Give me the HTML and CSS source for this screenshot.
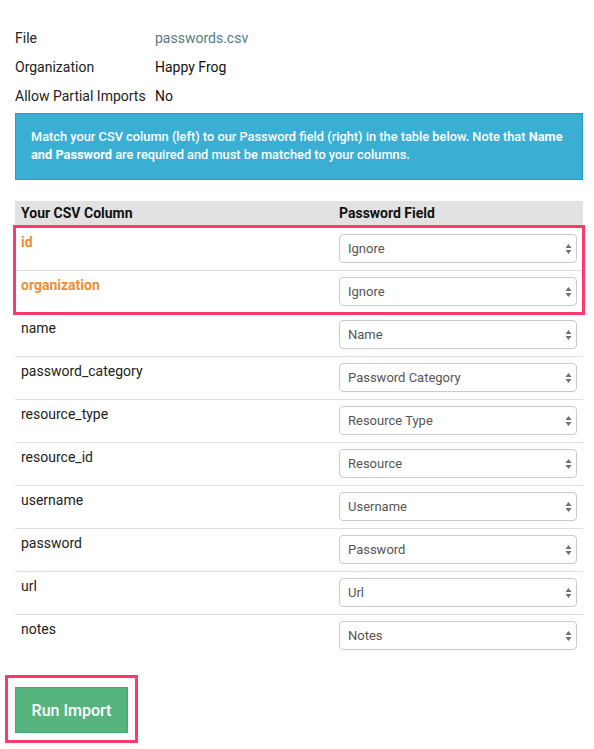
FILE: index.html
```html
<!DOCTYPE html>
<html>
<head>
<meta charset="utf-8">
<link rel="stylesheet" href="styles.css">
</head>
<body>
<div class="page">
  <div class="meta">
    <div class="meta-label">File</div><div class="meta-value file">passwords.csv</div>
    <div class="meta-label">Organization</div><div class="meta-value">Happy Frog</div>
    <div class="meta-label">Allow Partial Imports</div><div class="meta-value">No</div>
  </div>

  <div class="notice">Match your CSV column (left) to our Password field (right) in the table below. Note that <b>Name and Password</b> are required and must be matched to your columns.</div>

  <div class="table">
    <div class="row head">
      <div class="cell">Your CSV Column</div>
      <div class="cell">Password Field</div>
    </div>
    <div class="highlight">
      <div class="row">
        <div class="cell col warn">id</div>
        <div class="cell sel"><div class="select"><span>Ignore</span><svg width="7" height="12" viewBox="0 0 7 12"><path d="M3.5 1 L6.5 5 H0.5 Z M3.5 11 L6.5 7 H0.5 Z" fill="#6f6f6f"/></svg></div></div>
      </div>
      <div class="row">
        <div class="cell col warn">organization</div>
        <div class="cell sel"><div class="select"><span>Ignore</span><svg width="7" height="12" viewBox="0 0 7 12"><path d="M3.5 1 L6.5 5 H0.5 Z M3.5 11 L6.5 7 H0.5 Z" fill="#6f6f6f"/></svg></div></div>
      </div>
    </div>
    <div class="row">
      <div class="cell col">name</div>
      <div class="cell sel"><div class="select"><span>Name</span><svg width="7" height="12" viewBox="0 0 7 12"><path d="M3.5 1 L6.5 5 H0.5 Z M3.5 11 L6.5 7 H0.5 Z" fill="#6f6f6f"/></svg></div></div>
    </div>
    <div class="row">
      <div class="cell col">password_category</div>
      <div class="cell sel"><div class="select"><span>Password Category</span><svg width="7" height="12" viewBox="0 0 7 12"><path d="M3.5 1 L6.5 5 H0.5 Z M3.5 11 L6.5 7 H0.5 Z" fill="#6f6f6f"/></svg></div></div>
    </div>
    <div class="row">
      <div class="cell col">resource_type</div>
      <div class="cell sel"><div class="select"><span>Resource Type</span><svg width="7" height="12" viewBox="0 0 7 12"><path d="M3.5 1 L6.5 5 H0.5 Z M3.5 11 L6.5 7 H0.5 Z" fill="#6f6f6f"/></svg></div></div>
    </div>
    <div class="row">
      <div class="cell col">resource_id</div>
      <div class="cell sel"><div class="select"><span>Resource</span><svg width="7" height="12" viewBox="0 0 7 12"><path d="M3.5 1 L6.5 5 H0.5 Z M3.5 11 L6.5 7 H0.5 Z" fill="#6f6f6f"/></svg></div></div>
    </div>
    <div class="row">
      <div class="cell col">username</div>
      <div class="cell sel"><div class="select"><span>Username</span><svg width="7" height="12" viewBox="0 0 7 12"><path d="M3.5 1 L6.5 5 H0.5 Z M3.5 11 L6.5 7 H0.5 Z" fill="#6f6f6f"/></svg></div></div>
    </div>
    <div class="row">
      <div class="cell col">password</div>
      <div class="cell sel"><div class="select"><span>Password</span><svg width="7" height="12" viewBox="0 0 7 12"><path d="M3.5 1 L6.5 5 H0.5 Z M3.5 11 L6.5 7 H0.5 Z" fill="#6f6f6f"/></svg></div></div>
    </div>
    <div class="row">
      <div class="cell col">url</div>
      <div class="cell sel"><div class="select"><span>Url</span><svg width="7" height="12" viewBox="0 0 7 12"><path d="M3.5 1 L6.5 5 H0.5 Z M3.5 11 L6.5 7 H0.5 Z" fill="#6f6f6f"/></svg></div></div>
    </div>
    <div class="row">
      <div class="cell col">notes</div>
      <div class="cell sel"><div class="select"><span>Notes</span><svg width="7" height="12" viewBox="0 0 7 12"><path d="M3.5 1 L6.5 5 H0.5 Z M3.5 11 L6.5 7 H0.5 Z" fill="#6f6f6f"/></svg></div></div>
    </div>
  </div>

  <div class="action">
    <div class="action-frame">
      <button class="run">Run Import</button>
    </div>
  </div>
</div>
</body>
</html>
```

FILE: styles.css
```css
html, body {
  margin: 0;
  padding: 0;
  background: #ffffff;
}
body {
  font-family: Roboto, "Liberation Sans", Arial, sans-serif;
  color: #222;
  font-size: 14px;
  width: 594px;
  height: 749px;
  overflow: hidden;
}
.page {
  padding: 23px 11px 0 15px;
}
.meta {
  display: grid;
  grid-template-columns: 140px 1fr;
  grid-auto-rows: 29px;
  align-items: center;
  line-height: 18px;
}
.meta-label {
  color: #222;
}
.meta-value {
  color: #111;
}
.meta-value.file {
  color: #557a85;
}
.notice {
  margin-top: 3px;
  background: #3baed4;
  border: 1px solid #2f9bc0;
  color: #fff;
  font-size: 12.8px;
  font-weight: 500;
  line-height: 18px;
  padding: 14px 15px 15px 15px;
}
.notice b {
  font-weight: 700;
}
.table {
  margin-top: 21px;
}
.row {
  display: grid;
  grid-template-columns: 318px 1fr;
  border-top: 1px solid #dedede;
}
.row.head {
  background: #e2e2e2;
  border-top: none;
  font-weight: 700;
  color: #111;
  height: 26px;
}
.head .cell {
  padding: 3px 6px 5px 6px;
  line-height: 18px;
}
.highlight {
  outline: 3px solid #fb3a6b;
  outline-offset: -1px;
  position: relative;
}
.highlight .row:first-child {
  border-top-color: transparent;
}
.cell.col {
  padding: 5px 6px 0 6px;
  line-height: 18px;
  color: #222;
}
.cell.col.warn {
  color: #ec8f35;
  font-weight: 700;
}
.cell.sel {
  padding: 6px 6px 7px 6px;
}
.select {
  box-sizing: border-box;
  height: 29px;
  border: 1px solid #cbcbcb;
  border-radius: 4px;
  background: #fff;
  display: flex;
  align-items: center;
  justify-content: space-between;
  padding: 0 4px 0 8px;
  font-size: 13px;
  color: #555;
}
.select svg {
  display: block;
}
.action {
  margin-top: 18px;
  margin-left: -10px;
}
.action-frame {
  display: inline-block;
  border: 3px solid #fb3a6b;
  padding: 9px 7px 7px 7px;
  background: #fcfcfc;
}
.run {
  display: block;
  width: 113px;
  height: 46px;
  background: #56b47f;
  border: 1px solid #48a571;
  color: #fff;
  font-family: Roboto, "Liberation Sans", Arial, sans-serif;
  font-size: 16px;
  font-weight: 500;
  padding: 0;
}
```
